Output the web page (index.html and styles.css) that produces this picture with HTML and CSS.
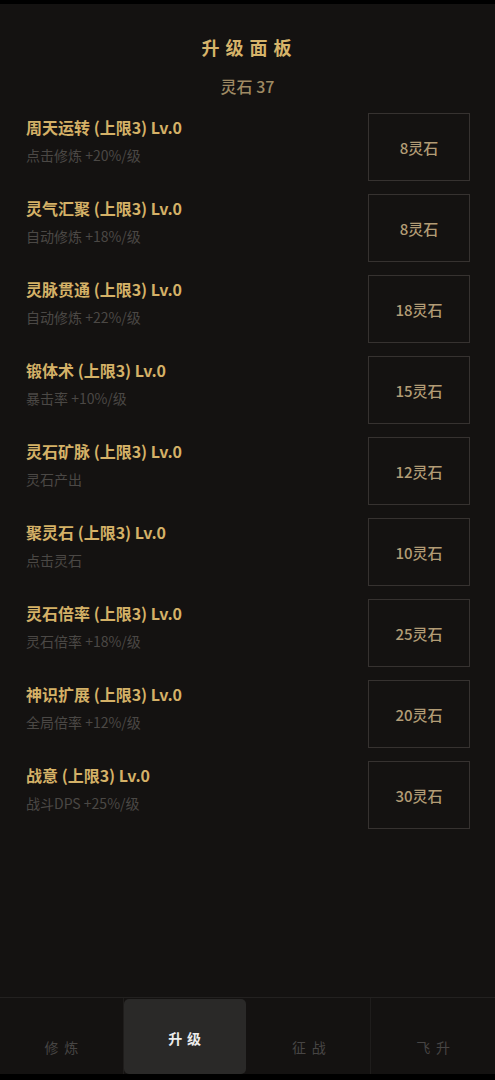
FILE: index.html
```html
<!DOCTYPE html>
<html lang="zh-CN">
<head>
<meta charset="utf-8">
<title>升级面板</title>
<link rel="stylesheet" href="styles.css">
</head>
<body>
<div class="app">
  <header class="header">
    <h1 class="title">升级面板</h1>
    <div class="stat">灵石 37</div>
  </header>
  <main class="list">
    <div class="row"><div class="info"><div class="name">周天运转 (上限3) Lv.0</div><div class="desc">点击修炼 +20%/级</div></div><button class="buy">8灵石</button></div>
    <div class="row"><div class="info"><div class="name">灵气汇聚 (上限3) Lv.0</div><div class="desc">自动修炼 +18%/级</div></div><button class="buy">8灵石</button></div>
    <div class="row"><div class="info"><div class="name">灵脉贯通 (上限3) Lv.0</div><div class="desc">自动修炼 +22%/级</div></div><button class="buy">18灵石</button></div>
    <div class="row"><div class="info"><div class="name">锻体术 (上限3) Lv.0</div><div class="desc">暴击率 +10%/级</div></div><button class="buy">15灵石</button></div>
    <div class="row"><div class="info"><div class="name">灵石矿脉 (上限3) Lv.0</div><div class="desc">灵石产出</div></div><button class="buy">12灵石</button></div>
    <div class="row"><div class="info"><div class="name">聚灵石 (上限3) Lv.0</div><div class="desc">点击灵石</div></div><button class="buy">10灵石</button></div>
    <div class="row"><div class="info"><div class="name">灵石倍率 (上限3) Lv.0</div><div class="desc">灵石倍率 +18%/级</div></div><button class="buy">25灵石</button></div>
    <div class="row"><div class="info"><div class="name">神识扩展 (上限3) Lv.0</div><div class="desc">全局倍率 +12%/级</div></div><button class="buy">20灵石</button></div>
    <div class="row"><div class="info"><div class="name">战意 (上限3) Lv.0</div><div class="desc">战斗DPS +25%/级</div></div><button class="buy">30灵石</button></div>
  </main>
  <nav class="nav">
    <div class="tab">修炼</div>
    <div class="tab active">升级</div>
    <div class="tab">征战</div>
    <div class="tab last">飞升</div>
  </nav>
</div>
</body>
</html>
```

FILE: styles.css
```css
* { box-sizing: border-box; }
html, body { margin: 0; padding: 0; background: #000; }
body {
  font-family: "Noto Sans CJK SC", "Noto Sans", sans-serif;
  width: 495px;
  height: 1080px;
  overflow: hidden;
}
.app {
  margin-top: 4px;
  height: 1070px;
  background: #141211;
  display: flex;
  flex-direction: column;
}
.header {
  padding-top: 31px;
  text-align: center;
}
.title {
  margin: 0;
  font-size: 18px;
  line-height: 24px;
  font-weight: 700;
  letter-spacing: 6px;
  padding-left: 4px;
  color: #d6b46a;
}
.stat {
  margin-top: 17px;
  font-size: 16px;
  line-height: 20px;
  font-weight: 500;
  color: #9f8a63;
}
.list {
  flex: 1;
  padding: 17px 25px 0 26px;
  display: flex;
  flex-direction: column;
  gap: 13px;
}
.row {
  display: flex;
  justify-content: space-between;
  align-items: flex-start;
  height: 68px;
}
.info { padding-top: 3px; }
.name {
  font-size: 16px;
  line-height: 22px;
  font-weight: 700;
  color: #d4b167;
}
.desc {
  margin-top: 8px;
  font-size: 14px;
  line-height: 18px;
  color: #4b4845;
}
.buy {
  width: 102px;
  height: 68px;
  background: transparent;
  border: 1px solid #363230;
  font-family: inherit;
  font-size: 15px;
  font-weight: 500;
  color: #b29c75;
  padding: 0;
}
.nav {
  height: 77px;
  border-top: 1px solid #232120;
  display: grid;
  grid-template-columns: repeat(4, 1fr);
}
.tab {
  display: flex;
  align-items: center;
  justify-content: center;
  padding-top: 22px;
  font-size: 14px;
  letter-spacing: 6px;
  text-indent: 6px;
  color: #474544;
  border-right: 1px solid #1f1d1c;
}
.tab.last { border-right: none; }
.tab.active {
  margin: 1px 2px 0 0;
  padding-top: 3px;
  background: #2a2928;
  border-radius: 5px;
  border-right: none;
  color: #ececec;
  font-weight: 700;
  letter-spacing: 5px;
  text-indent: 5px;
}
```
